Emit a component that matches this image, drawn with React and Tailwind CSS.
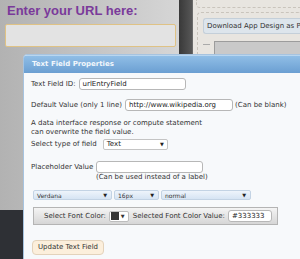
import React from "react";

function Select({ width, label }) {
  return (
    <div
      className={`${width} h-[10px] flex items-center justify-between rounded-[2px] border border-[#c3d3e4] bg-gradient-to-b from-[#eef4fb] to-[#d6e4f3] pl-[3px] pr-[4px] text-[6px] text-[#333]`}
    >
      <span>{label}</span>
      <span className="text-[5px] text-[#222]">▼</span>
    </div>
  );
}

export default function App() {
  return (
    <div className="relative w-[300px] h-[259px] overflow-hidden bg-[#2e3035] font-['DejaVu_Sans',sans-serif]">
      {/* page behind the dialog */}
      <div className="flex h-[210px]">
        <div className="w-[179px] bg-gradient-to-r from-[#b2b2b2] to-[#d6d6d6] pl-[5px] pt-[3px]">
          <h1 className="pl-[2px] font-['Liberation_Sans',sans-serif] text-[13px] font-bold leading-[16px] text-[#7a3a9a]">
            Enter your URL here:
          </h1>
          <div className="mt-[5px] h-[23px] w-[171px] rounded-[2px] border border-[#dfc285] bg-[#e3e3e3]" />
        </div>
        <div className="w-[14px] bg-gradient-to-r from-[#393939] to-[#575757] border-r border-[#6a6a6a]" />
        <div className="flex-1 overflow-hidden bg-[#e8e5e0] pl-[3px]">
          <div className="h-[8px] rounded-bl-[4px] border-b border-l border-dashed border-[#c9c4bc]" />
          <div className="ml-[1px] mt-[4px] h-[120px] rounded-tl-[4px] border-l border-t border-dashed border-[#c9c4bc] pl-[5px] pt-[5px]">
            <div className="flex h-[16px] items-center whitespace-nowrap rounded-l-[3px] border border-r-0 border-[#c4cfd9] bg-[#dde5ec] pl-[3px] text-[7px] text-[#333]">
              Download App Design as PDF
            </div>
            <div className="mt-[7px] flex items-start">
              <div className="mt-[3px] h-px w-[7px] bg-[#aaaaaa]" />
              <div className="ml-[4px] h-[20px] flex-1 border border-r-0 border-[#9c9c9c] bg-[#c9c9c9]" />
            </div>
          </div>
        </div>
      </div>

      {/* dialog */}
      <div className="absolute left-[23px] top-[54px] h-[215px] w-[300px] overflow-hidden rounded-tl-[4px] border border-[#a6c3df] bg-[#f7f9fb]">
        <div className="flex h-[18px] items-center border-t border-[#b9d6ef] bg-gradient-to-b from-[#90bee6] to-[#6b9fd2] pl-[8px] text-[7px] font-bold text-[#f2f7fc]">
          Text Field Properties
        </div>

        <div className="pl-[7px] text-[7px] leading-[9px] text-[#333]">
          <div className="mt-[5px] flex items-center">
            <span>Text Field ID:</span>
            <div className="ml-[3px] flex h-[12px] w-[107px] items-center rounded-[3px] border border-[#b7b7b7] bg-white pl-[3px] text-[#222]">
              urlEntryField
            </div>
          </div>

          <div className="mt-[9px] flex items-center">
            <span>Default Value (only 1 line)</span>
            <div className="ml-[3px] flex h-[12px] w-[108px] items-center rounded-[3px] border border-[#b7b7b7] bg-white pl-[3px] text-[#222]">
              http://www.wikipedia.org
            </div>
            <span className="ml-[2px]">(Can be blank)</span>
          </div>

          <p className="mt-[8px]">
            A data interface response or compute statement
            <br />
            can overwrite the field value.
          </p>

          <div className="mt-[2px] flex items-center">
            <span>Select type of field</span>
            <div className="ml-[6px] flex h-[11px] w-[65px] items-center justify-between rounded-[2px] border border-[#c4c4c4] bg-white pl-[3px] pr-[3px] text-[#222]">
              <span>Text</span>
              <span className="text-[5px]">▼</span>
            </div>
          </div>

          <div className="mt-[11px] flex items-center">
            <span>Placeholder Value</span>
            <div className="ml-[3px] h-[12px] w-[107px] rounded-[3px] border border-[#b7b7b7] bg-white" />
          </div>
          <div className="ml-[65px]">(Can be used instead of a label)</div>

          <div className="ml-[2px] mt-[8px] flex gap-[2px]">
            <Select width="w-[79px]" label="Verdana" />
            <Select width="w-[45px]" label="16px" />
            <Select width="w-[90px]" label="normal" />
          </div>

          <div className="ml-[2px] mt-[7px] flex h-[18px] w-[245px] items-center border border-[#b4b4b4] bg-gradient-to-b from-[#f4f4f4] to-[#d6d6d6] pl-[10px]">
            <span>Select Font Color:</span>
            <div className="ml-[3px] flex h-[11px] w-[20px] items-center rounded-[2px] border border-[#bdbdbd] bg-white pl-[1px]">
              <div className="h-[8px] w-[8px] bg-[#333333]" />
              <span className="ml-[2px] text-[5px]">▼</span>
            </div>
            <span className="ml-[4px]">Selected Font Color Value:</span>
            <div className="ml-[3px] flex h-[12px] w-[44px] items-center rounded-[3px] border border-[#b7b7b7] bg-white pl-[3px] text-[#222]">
              #333333
            </div>
          </div>

          <div className="ml-[1px] mt-[15px] flex h-[15px] w-[72px] items-center justify-center rounded-[4px] border border-[#e3d2bb] bg-[#fcefdc] text-[#333]">
            Update Text Field
          </div>
        </div>
      </div>
    </div>
  );
}
